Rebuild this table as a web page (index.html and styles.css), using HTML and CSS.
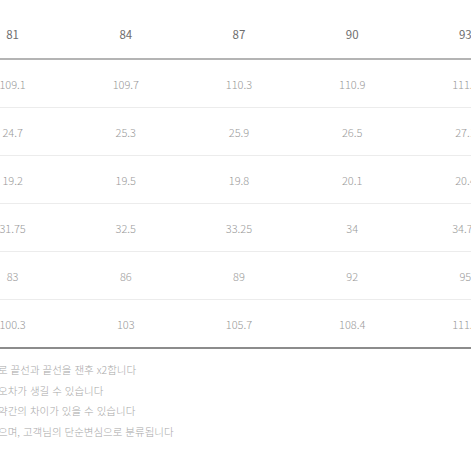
FILE: index.html
```html
<!DOCTYPE html>
<html lang="ko">
<head>
<meta charset="utf-8">
<link rel="stylesheet" href="styles.css">
</head>
<body>
<div class="page">
  <div class="table">
    <div class="row head">
      <div class="cell">81</div><div class="cell">84</div><div class="cell">87</div><div class="cell">90</div><div class="cell">93</div>
    </div>
    <div class="row">
      <div class="cell">109.1</div><div class="cell">109.7</div><div class="cell">110.3</div><div class="cell">110.9</div><div class="cell">111.5</div>
    </div>
    <div class="row">
      <div class="cell">24.7</div><div class="cell">25.3</div><div class="cell">25.9</div><div class="cell">26.5</div><div class="cell">27.1</div>
    </div>
    <div class="row">
      <div class="cell">19.2</div><div class="cell">19.5</div><div class="cell">19.8</div><div class="cell">20.1</div><div class="cell">20.4</div>
    </div>
    <div class="row">
      <div class="cell">31.75</div><div class="cell">32.5</div><div class="cell">33.25</div><div class="cell">34</div><div class="cell">34.75</div>
    </div>
    <div class="row">
      <div class="cell">83</div><div class="cell">86</div><div class="cell">89</div><div class="cell">92</div><div class="cell">95</div>
    </div>
    <div class="row last">
      <div class="cell">100.3</div><div class="cell">103</div><div class="cell">105.7</div><div class="cell">108.4</div><div class="cell">111.1</div>
    </div>
  </div>
  <div class="notes">
    <p>로 끝선과 끝선을 잰후 x2합니다</p>
    <p>오차가 생길 수 있습니다</p>
    <p>약간의 차이가 있을 수 있습니다</p>
    <p>으며, 고객님의 단순변심으로 분류됩니다</p>
  </div>
</div>
</body>
</html>
```

FILE: styles.css
```css
html, body {
  margin: 0;
  padding: 0;
  background: #ffffff;
}
.page {
  width: 471px;
  height: 471px;
  overflow: hidden;
  padding-top: 10px;
  box-sizing: border-box;
  font-family: "Noto Sans CJK KR", "Noto Sans", sans-serif;
}
.table {
  margin-left: -44px;
  width: 566px;
}
.row {
  display: grid;
  grid-template-columns: repeat(5, 113.2px);
  height: 47px;
  border-bottom: 1px solid #ececec;
  align-items: center;
  font-size: 11px;
  color: #9a9a9a;
  font-weight: 300;
}
.row.head {
  height: 48px;
  border-bottom: 2px solid #b4b4b4;
  color: #6e6e6e;
  font-size: 11.5px;
  font-weight: 400;
}
.row.last {
  border-bottom: 2px solid #8c8c8c;
}
.cell {
  text-align: center;
  line-height: 14px;
}
.notes {
  margin-top: 11px;
  margin-left: -2px;
  font-size: 10.5px;
  color: #a8a8a8;
  font-weight: 300;
}
.notes p {
  margin: 0;
  line-height: 20.5px;
  white-space: nowrap;
}
```
